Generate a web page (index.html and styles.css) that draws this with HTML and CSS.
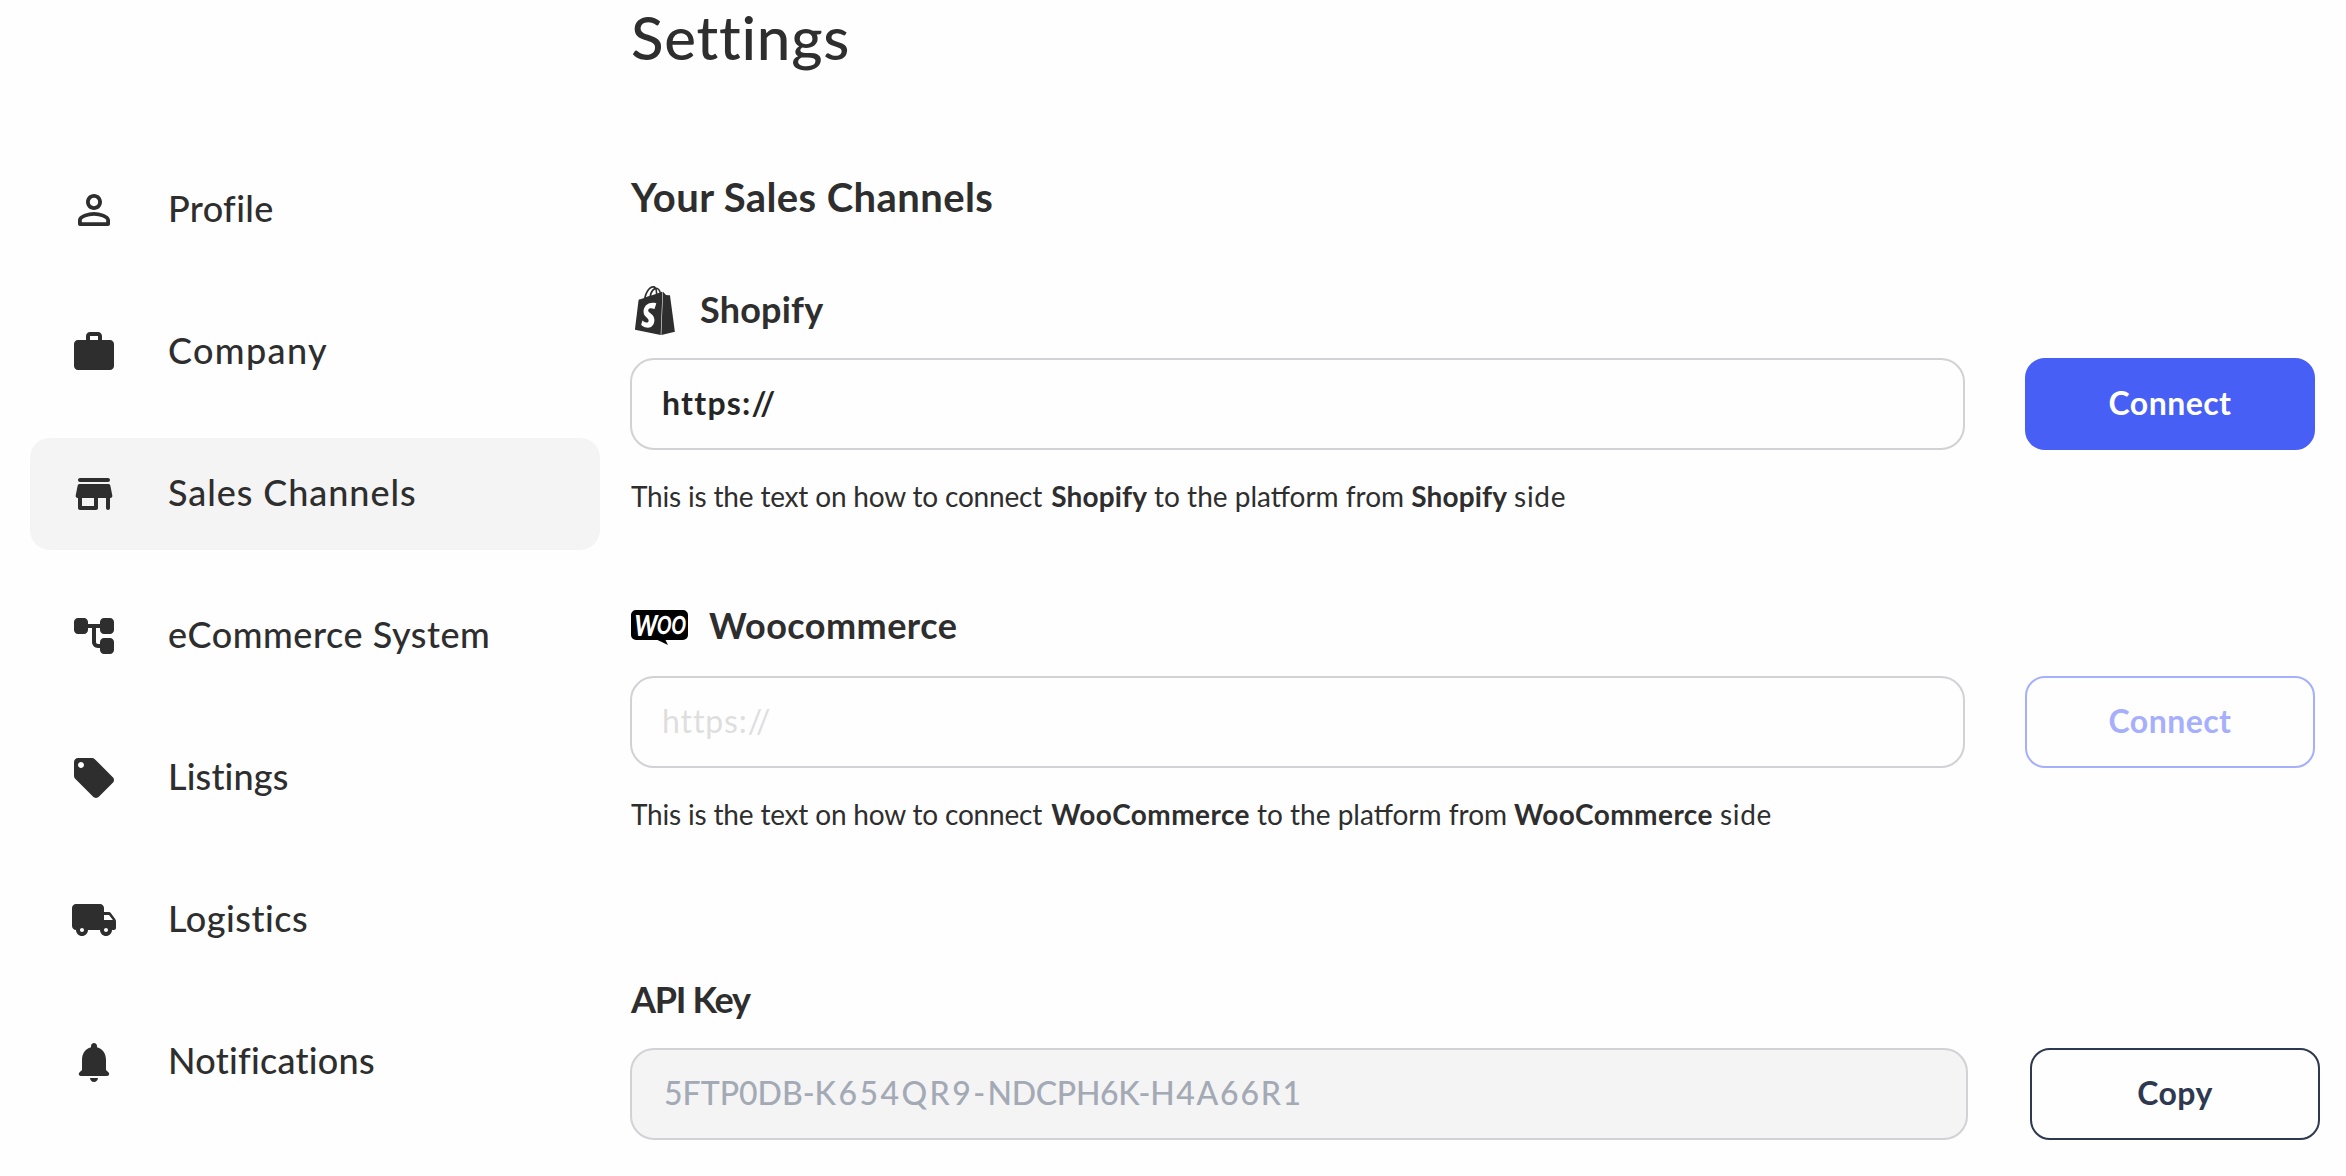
FILE: index.html
```
<!DOCTYPE html>
<html lang="en">
<head>
<meta charset="utf-8">
<title>Settings</title>
<link rel="stylesheet" href="styles.css">
</head>
<body>
<div class="page">
  <nav class="sidebar">
    <a class="nav-item">
      <svg class="nav-icon" viewBox="0 0 24 24"><path d="M12 5.9c1.16 0 2.1.94 2.1 2.1s-.94 2.1-2.1 2.1S9.9 9.16 9.9 8s.94-2.1 2.1-2.1m0 9c2.97 0 6.1 1.46 6.1 2.1v1.1H5.9V17c0-.64 3.13-2.1 6.1-2.1M12 4C9.79 4 8 5.79 8 8s1.79 4 4 4 4-1.79 4-4-1.79-4-4-4zm0 9c-2.67 0-8 1.34-8 4v2c0 .55.45 1 1 1h14c.55 0 1-.45 1-1v-2c0-2.66-5.33-4-8-4z"/></svg>
      <span class="nav-label profile">Profile</span>
    </a>
    <a class="nav-item">
      <svg class="nav-icon" viewBox="0 0 24 24"><path d="M14 6V4h-4v2h4zM4 6h4V4c0-1.11.89-2 2-2h4c1.11 0 2 .89 2 2v2h4c1.11 0 2 .89 2 2v11c0 1.11-.89 2-2 2H4c-1.11 0-2-.89-2-2V8c0-1.11.89-2 2-2z"/></svg>
      <span class="nav-label company">Company</span>
    </a>
    <a class="nav-item active">
      <svg class="nav-icon" viewBox="0 0 24 24"><path d="M5 6h14c.55 0 1-.45 1-1s-.45-1-1-1H5c-.55 0-1 .45-1 1s.45 1 1 1zm15.16 1.8c-.09-.46-.5-.8-.98-.8H4.82c-.48 0-.89.34-.98.8l-1 5c-.12.62.35 1.2.98 1.2H4v5c0 .55.45 1 1 1h8c.55 0 1-.45 1-1v-5h4v5c0 .55.45 1 1 1s1-.45 1-1v-5h.18c.63 0 1.1-.58.98-1.2l-1-5zM12 18H6v-4h6v4z"/></svg>
      <span class="nav-label channels">Sales Channels</span>
    </a>
    <a class="nav-item">
      <svg class="nav-icon" viewBox="0 0 24 24"><path d="M22 9V5c0-1.1-.9-2-2-2h-3c-1.1 0-2 .9-2 2v1H9V5c0-1.100-.9-2-2-2H4c-1.100 0-2 .9-2 2v4c0 1.100.9 2 2 2h3c1.100 0 2-.9 2-2V8h2v7.010C11 16.660 12.340 18 13.990 18H15v1c0 1.100.9 2 2 2h3c1.100 0 2-.9 2-2v-4c0-1.100-.9-2-2-2h-3c-1.100 0-2 .9-2 2v1h-1.010c-.54 0-.99-.45-.99-.99V8h2v1c0 1.100.9 2 2 2h3c1.100 0 2-.9 2-2z"/></svg>
      <span class="nav-label ecommerce">eCommerce System</span>
    </a>
    <a class="nav-item">
      <svg class="nav-icon" viewBox="0 0 24 24"><path d="M21.410 11.580l-9-9C12.050 2.220 11.550 2 11 2H4c-1.100 0-2 .9-2 2v7c0 .55.220 1.050.590 1.420l9 9c.36.36.86.58 1.410.58.55 0 1.050-.220 1.410-.590l7-7c.370-.360.590-.860.590-1.410 0-.55-.23-1.060-.590-1.420zM5.500 7C4.670 7 4 6.330 4 5.500S4.670 4 5.500 4 7 4.670 7 5.500 6.330 7 5.500 7z"/></svg>
      <span class="nav-label listings">Listings</span>
    </a>
    <a class="nav-item">
      <svg class="nav-icon" viewBox="0 0 24 24"><path d="M19.500 8H17V6c0-1.100-.9-2-2-2H3c-1.100 0-2 .9-2 2v9c0 1.100.9 2 2 2 0 1.660 1.340 3 3 3s3-1.340 3-3h6c0 1.660 1.340 3 3 3s3-1.340 3-3h1c.55 0 1-.45 1-1v-3.330c0-.430-.140-.850-.400-1.200L20.300 8.400c-.190-.250-.490-.400-.800-.400zM6 18c-.55 0-1-.45-1-1s.45-1 1-1 1 .45 1 1-.45 1-1 1zm13.500-8.500l1.960 2.500H17V9.500h2.500zM18 18c-.55 0-1-.45-1-1s.45-1 1-1 1 .45 1 1-.45 1-1 1z"/></svg>
      <span class="nav-label logistics">Logistics</span>
    </a>
    <a class="nav-item">
      <svg class="nav-icon" viewBox="0 0 24 24"><path d="M12 22c1.100 0 2-.9 2-2h-4c0 1.100.890 2 2 2zm6-6v-5c0-3.070-1.640-5.640-4.500-6.320V4c0-.83-.67-1.500-1.500-1.500s-1.500.67-1.500 1.500v.68C7.630 5.360 6 7.920 6 11v5l-1.290 1.290c-.63.63-.190 1.710.7 1.710h13.170c.89 0 1.340-1.080.71-1.710L18 16z"/></svg>
      <span class="nav-label notifications">Notifications</span>
    </a>
  </nav>

  <main class="content">
    <h1 class="title">Settings</h1>
    <h2 class="subtitle">Your Sales Channels</h2>

    <section class="channel">
      <div class="channel-head">
        <svg class="shopify-logo" viewBox="1.448 0 21.105 24" preserveAspectRatio="none"><path d="M15.337 23.979l7.216-1.561s-2.604-17.613-2.625-17.730c-.018-.116-.114-.192-.211-.192s-1.929-.136-1.929-.136-1.275-1.274-1.439-1.411c-.045-.037-.075-.057-.121-.074l-.914 21.104h.023zM11.710 11.305s-.81-.424-1.774-.424c-1.447 0-1.504.906-1.504 1.141 0 1.232 3.240 1.715 3.240 4.629 0 2.295-1.440 3.760-3.406 3.760-2.354 0-3.540-1.465-3.540-1.465l.646-2.086s1.245 1.066 2.280 1.066c.675 0 .975-.545.975-.932 0-1.619-2.654-1.694-2.654-4.359-.034-2.237 1.571-4.416 4.827-4.416 1.257 0 1.875.361 1.875.361l-.945 2.715-.020.010zM11.170.830c.136 0 .271.038.405.135-.984.465-2.064 1.639-2.508 3.992-.656.213-1.293.405-1.889.578C7.697 3.750 8.951.840 11.170.840V.830zm1.235 2.949v.135c-.754.232-1.583.484-2.394.736.466-1.777 1.333-2.645 2.085-2.971.193.501.309 1.176.309 2.100zm.539-2.234c.694.074 1.141.867 1.429 1.755-.349.114-.735.231-1.158.366v-.252c0-.752-.096-1.371-.271-1.871v.002zm2.992 1.289c-.020 0-.060.021-.078.021s-.289.075-.714.210c-.423-1.233-1.176-2.370-2.508-2.370h-.115C12.135.209 11.669 0 11.265 0 8.159 0 6.675 3.877 6.210 5.846c-1.194.365-2.063.636-2.160.674-.675.213-.694.232-.772.870-.075.462-1.830 14.063-1.830 14.063L15.009 24l.927-21.166z"/></svg>
        <h3 class="channel-name shopify-name">Shopify</h3>
      </div>
      <div class="field-row">
        <div class="field"><span class="value">https://</span></div>
        <button class="button primary">Connect</button>
      </div>
      <p class="help"><span>This is the text on how to connect</span> <b class="first">Shopify</b> <span class="mid">to the platform from</span> <b>Shopify</b> <span class="end">side</span></p>
    </section>

    <section class="channel woo">
      <div class="channel-head">
        <svg class="woo-logo" viewBox="0 0 57 35"><path d="M5 0h47a5 5 0 0 1 5 5v20a5 5 0 0 1-5 5H34.500l2.500 5-10.500-5H5a5 5 0 0 1-5-5V5a5 5 0 0 1 5-5z"/><g transform="translate(5.500 0) skewX(-7)"><text class="woo-mark w" x="0" y="25.500" textLength="23" lengthAdjust="spacingAndGlyphs">W</text><text class="woo-mark" x="22.500" y="24" textLength="29" lengthAdjust="spacingAndGlyphs">OO</text></g></svg>
        <h3 class="channel-name woo-name">Woocommerce</h3>
      </div>
      <div class="field-row">
        <div class="field"><span class="placeholder">https://</span></div>
        <button class="button muted">Connect</button>
      </div>
      <p class="help"><span>This is the text on how to connect</span> <b class="first wide">WooCommerce</b> <span class="mid">to the platform from</span> <b class="wide">WooCommerce</b> <span class="end">side</span></p>
    </section>

    <section class="api">
      <h3 class="api-name">API Key</h3>
      <div class="field-row key-row">
        <div class="field locked"><span class="key"><span>5FTP0DB-</span><span class="k2">K654QR9-</span><span class="k3">NDCPH6K-</span><span class="k4">H4A66R1</span></span></div>
        <button class="button outline">Copy</button>
      </div>
    </section>
  </main>
</div>
</body>
</html>
```
FILE: styles.css
```
* { box-sizing: border-box; }

body {
  margin: 0;
  background: #fefefe;
  color: #2e2e2e;
  font-family: Lato, "Open Sans", sans-serif;
}

h1, h2, h3, p { margin: 0; }

.page {
  display: grid;
  grid-template-columns: 570px 1fr;
  column-gap: 30px;
  height: 1176px;
  padding-left: 30px;
  overflow: hidden;
}

/* Sidebar */
.sidebar {
  display: flex;
  flex-direction: column;
  gap: 30px;
  padding-top: 154px;
}

.nav-item {
  display: flex;
  align-items: center;
  gap: 50px;
  height: 112px;
  padding-left: 40px;
  border-radius: 20px;
}

.nav-item.active { background: #f4f4f4; }

.nav-icon {
  width: 48px;
  height: 48px;
  fill: #2e2e2e;
}

.nav-label {
  padding-bottom: 4px;
  font-size: 36px;
  font-weight: 500;
  line-height: 44px;
}

.profile { letter-spacing: 0.35px; }
.company { letter-spacing: 1.37px; }
.channels { letter-spacing: 0.94px; }
.ecommerce { letter-spacing: 0.55px; }
.listings { letter-spacing: 0.15px; }
.logistics { letter-spacing: 0.5px; }
.notifications { letter-spacing: 0.27px; }

/* Main column */
.title {
  padding: 1px 0 0 1px;
  font-size: 60px;
  font-weight: 500;
  line-height: 72px;
  letter-spacing: 0.75px;
}

.subtitle {
  margin-top: 100px;
  padding-left: 1px;
  font-size: 40px;
  font-weight: 700;
  line-height: 48px;
  letter-spacing: 0.4px;
}

.channel { padding-top: 65px; }
.channel.woo { padding-top: 89px; }

.channel-head {
  display: flex;
  align-items: center;
  height: 50px;
  margin-bottom: 22px;
}

.woo .channel-head { margin-bottom: 24px; }

.shopify-logo {
  width: 40px;
  height: 49px;
  margin: 0 25px 1px 5px;
  fill: #2e2e2e;
}

.woo-logo {
  width: 57px;
  height: 35px;
  margin: 0 21px 0 1px;
  overflow: visible;
}

.woo-mark {
  fill: #fff;
  font-size: 25px;
  font-weight: 900;
}

.woo-mark.w { font-size: 29px; }

.channel-name {
  padding-bottom: 4px;
  font-size: 36px;
  font-weight: 700;
  line-height: 44px;
}

.shopify-name { letter-spacing: 0.2px; }
.woo-name { letter-spacing: 0.45px; }

.field-row {
  display: grid;
  grid-template-columns: 1335px 290px;
  column-gap: 60px;
  height: 92px;
}

.key-row {
  grid-template-columns: 1338px 290px;
  column-gap: 62px;
}

.field {
  display: flex;
  align-items: center;
  padding: 0 30px 3px;
  border: 2px solid #d1d1d6;
  border-radius: 24px;
  font-size: 32px;
}

.value {
  color: #252525;
  font-weight: 700;
  letter-spacing: 1.25px;
}

.placeholder {
  color: #dedede;
  letter-spacing: 0.9px;
}

.locked {
  background: #f4f4f4;
  color: #a3a9b5;
  padding-left: 32px;
}

.key {
  font-weight: 500;
  white-space: nowrap;
}

.k2 { letter-spacing: 2.45px; }
.k3 { letter-spacing: -0.3px; }
.k4 { letter-spacing: 1.7px; }

.button {
  padding: 0 0 3px;
  border: 2px solid;
  border-radius: 20px;
  background: transparent;
  font: 700 32px Lato, "Open Sans", sans-serif;
  letter-spacing: 0.45px;
}

.primary {
  border-color: #485ff6;
  background: #485ff6;
  color: #fff;
}

.muted {
  border-color: #a6affc;
  color: #a6affc;
}

.outline {
  border-color: #2e384f;
  color: #2e384f;
}

.help {
  margin-top: 29px;
  padding-left: 1px;
  font-size: 28px;
  line-height: 34px;
  letter-spacing: -0.18px;
  white-space: nowrap;
}

.help b {
  font-weight: 700;
  letter-spacing: 0.15px;
}

.help b.first { margin-left: 2px; }
.help b.wide { letter-spacing: 0.43px; }
.mid { letter-spacing: 0; }
.end { letter-spacing: 0.7px; }

.api { padding-top: 146px; }

.api-name {
  margin-bottom: 27px;
  padding-left: 1px;
  font-size: 36px;
  font-weight: 700;
  line-height: 44px;
  letter-spacing: -1.3px;
}
```
